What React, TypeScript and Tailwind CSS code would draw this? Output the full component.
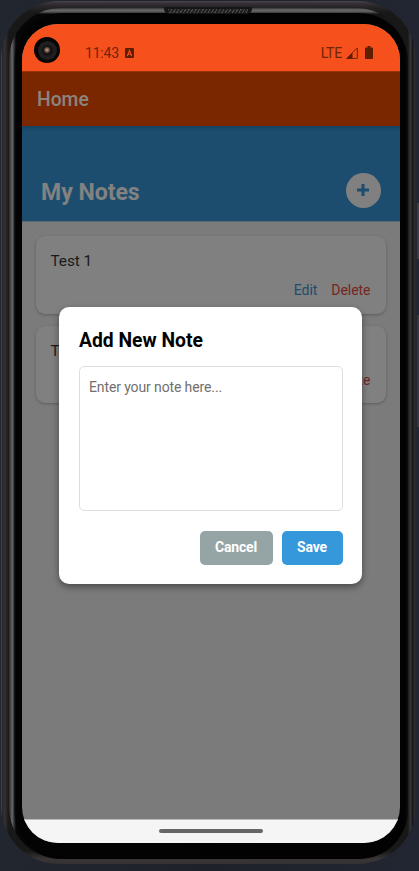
import React from "react";

function StatusBar() {
  return (
    <div className="relative flex h-[47px] shrink-0 items-center bg-[#f6511d] pt-[10px] text-[#702507]">
      <div className="absolute left-[12px] top-[13px] flex size-[26px] items-center justify-center rounded-full bg-[#050505]">
        <div className="flex size-[19px] items-center justify-center rounded-full bg-[#1f1f1f]">
          <div className="flex size-[11px] items-center justify-center rounded-full bg-[#151313]">
            <div className="size-[6px] rounded-full bg-[radial-gradient(circle,#d0b0a4_0%,#7b5b50_40%,#2b2020_100%)]" />
          </div>
        </div>
      </div>
      <span className="ml-[63px] w-[34px] text-[14px] leading-none tracking-[-0.2px]">11:43</span>
      <svg className="ml-[6px] h-[10px] w-[9px]" viewBox="0 0 9 10">
        <rect width="9" height="10" rx="1" fill="#5e1e00" />
        <path d="M2.3 8 L4.5 2.4 L6.7 8 M3.2 6.2 H5.8" stroke="#f6511d" strokeWidth="1.1" fill="none" />
      </svg>
      <span className="ml-auto text-[14px] leading-none tracking-[-0.2px]">LTE</span>
      <svg className="ml-[4px] h-[12px] w-[12px]" viewBox="0 0 12 12">
        <path d="M0.8 11.4 L11.3 0.9 V11.4 Z" fill="none" stroke="#702507" strokeWidth="1" />
        <path d="M0.3 11.9 L6.5 5.7 V11.9 Z" fill="#5e1e00" />
      </svg>
      <svg className="ml-[7px] mr-[27px] h-[13px] w-[8px]" viewBox="0 0 8 13">
        <path d="M2.5 0 H5.5 V1.5 H7.2 Q8 1.5 8 2.3 V12.2 Q8 13 7.2 13 H0.8 Q0 13 0 12.2 V2.3 Q0 1.5 0.8 1.5 H2.5 Z" fill="#5e1e00" />
      </svg>
    </div>
  );
}

function NoteCard({ title }: { title: string }) {
  return (
    <div className="flex h-[77.5px] flex-col rounded-[9px] bg-[#808080] px-[15px] pt-[15px] shadow-[0_1px_3px_rgba(0,0,0,0.25)]">
      <p className="text-[15.4px] leading-[20px] tracking-[-0.1px] text-[#191919]">{title}</p>
      <div className="mt-[10px] flex justify-end gap-[14px] text-[14px] leading-[18px] tracking-[-0.05px]">
        <span className="text-[#1c4d70]">Edit</span>
        <span className="text-[#75261e]">Delete</span>
      </div>
    </div>
  );
}

function AddNoteDialog() {
  return (
    <div className="absolute left-[37px] top-[283px] flex h-[277px] w-[303px] flex-col rounded-[10px] bg-white px-[20px] pt-[22px] shadow-[0_3px_7px_rgba(0,0,0,0.4)]">
      <h2 className="text-[19.3px] font-bold leading-[24px] text-black">Add New Note</h2>
      <div className="mt-[13px] h-[145px] w-[264px] rounded-[5px] border border-[#dedede] px-[9px] pt-[11px] text-[14px] leading-[18px] tracking-[-0.12px] text-[#707070]">
        Enter your note here...
      </div>
      <div className="-mr-[0.5px] mt-[19.5px] flex justify-end gap-[9px] text-[14px] font-bold tracking-[-0.15px] text-white">
        <button className="h-[34px] w-[73px] rounded-[5px] bg-[#95a5a6]">Cancel</button>
        <button className="h-[34px] w-[61px] rounded-[5px] bg-[#3498db]">Save</button>
      </div>
    </div>
  );
}

function Screen() {
  return (
    <div className="relative flex h-[819px] w-[378px] flex-col overflow-hidden rounded-[36px] bg-[#7b7b7b]">
      <StatusBar />
      <header className="flex h-[55px] shrink-0 items-center border-t border-[#9b3308] bg-[#7a2700] pl-[15px] pt-[2px] text-[19.3px] font-medium text-[#8b8582]">
        Home
      </header>
      <section className="flex h-[95px] shrink-0 items-end justify-between bg-[#1c4d6e] bg-[linear-gradient(#16415e,#1c4d6e_5px)] pb-[13px] pl-[19px] pr-[19.5px]">
        <h1 className="text-[23.1px] font-bold leading-[30px] tracking-[-0.05px] text-[#828282]">My Notes</h1>
        <div className="mb-[0.5px] flex size-[35px] items-center justify-center rounded-full bg-[#808080]">
          <svg className="size-[12px]" viewBox="0 0 12 12">
            <path d="M6 0 V12 M0 6 H12" stroke="#1c4d6e" strokeWidth="3" />
          </svg>
        </div>
      </section>
      <main className="flex grow flex-col gap-[12px] border-t border-[#5b6b77] pl-[13.5px] pr-[14.5px] pt-[14px]">
        <NoteCard title="Test 1" />
        <NoteCard title="Test 2" />
      </main>
      <footer className="flex h-[24px] shrink-0 justify-center border-t border-[#b9b9b9] bg-[#f5f5f5] pt-[9px]">
        <div className="h-[3.5px] w-[104px] rounded-full bg-[#666666]" />
      </footer>
      <AddNoteDialog />
    </div>
  );
}

export default function App() {
  return (
    <div className="relative h-[871px] w-[419px] overflow-hidden bg-[linear-gradient(90deg,#22262f,#1e2228_50%,#222632)] pl-[1px] pt-[1px] font-['Roboto',sans-serif]">
      <div className="absolute right-0 top-[203px] h-[56px] w-[2px] bg-[#3b3d40]" />
      <div className="absolute right-0 top-[315px] h-[112px] w-[2px] bg-[#35373b]" />
      <div className="h-[863px] w-[414.5px] rounded-[58px] bg-[linear-gradient(#4b464d_0,#373238_2px,#2a272a_5px,transparent_12px,transparent_850px,#3a3637_858px,#343132_863px),linear-gradient(90deg,#55565a_0,#2c2c2e_1px,#242324_2px,#383435_3px,#242223_6px,#181818_8px,#181818_407px,#333_409px,#343435_410px,#0e0e0e_412px,#333435_413px,#222_415px)] pl-[8px] pt-[7px]">
        <div className="relative h-[851px] w-[399px] rounded-[52px] bg-[linear-gradient(#343434_0,#686868_2px,#555_4px,transparent_6px),linear-gradient(90deg,#2a2a2a_0,#4b4c4c_2px,#6a6b6b_3px,#353535_5px,#060606_7px,#060606_50%,transparent_398px)] pl-[5px] pt-[5px]">
          <div className="absolute left-[155px] top-[-1px] flex h-[7px] w-[88px] items-center rounded-b-[5px] bg-[#151515] px-[4px]">
            <div className="h-[4px] w-full bg-[repeating-linear-gradient(120deg,#4a4a4a_0,#4a4a4a_1px,#202020_1px,#202020_3px)]" />
          </div>
          <div className="h-[846px] w-[394px] rounded-[49px] bg-[linear-gradient(90deg,#1a1a1a_0,#030303_2px,#020202_391px,#0c0c0c_394px)] pl-[8px] pt-[11px]">
            <Screen />
          </div>
        </div>
      </div>
    </div>
  );
}
